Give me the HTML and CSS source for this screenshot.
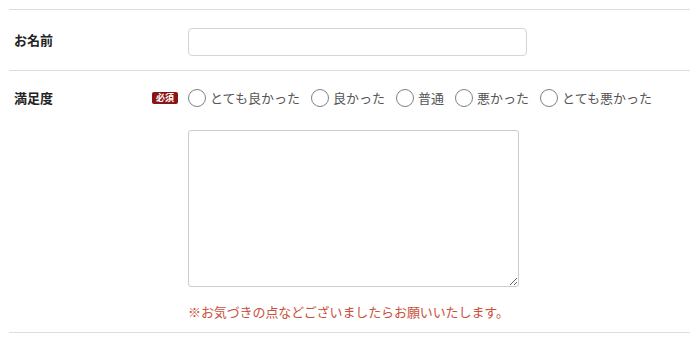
FILE: index.html
```html
<!DOCTYPE html>
<html lang="ja">
<head>
    <meta charset="UTF-8">
    <meta name="viewport" content="width=device-width, initial-scale=1.0">
    <title>アンケート</title>
    <link rel="stylesheet" href="styles.css">
</head>
<body>
    <form class="survey-form">
        <div class="form-row form-row-center">
            <div class="form-label">
                <label for="name">お名前</label>
            </div>
            <div class="form-field">
                <input type="text" id="name" name="name" class="text-input">
            </div>
        </div>
        <div class="form-row">
            <div class="form-label form-label-top">
                <span>満足度</span>
                <span class="required">必須</span>
            </div>
            <div class="form-field form-field-last">
                <div class="radio-group">
                    <label class="radio-item"><input type="radio" name="rating" value="5">とても良かった</label>
                    <label class="radio-item"><input type="radio" name="rating" value="4">良かった</label>
                    <label class="radio-item"><input type="radio" name="rating" value="3">普通</label>
                    <label class="radio-item"><input type="radio" name="rating" value="2">悪かった</label>
                    <label class="radio-item"><input type="radio" name="rating" value="1">とても悪かった</label>
                </div>
                <textarea name="comment" class="comment-box"></textarea>
                <p class="note">※お気づきの点などございましたらお願いいたします。</p>
            </div>
        </div>
    </form>
</body>
</html>
```

FILE: styles.css
```css
/* survey form */
body {
    margin: 0;
    padding: 9px 10px 0 9px;
    font-family: "Noto Sans CJK JP", "Noto Sans", sans-serif;
    font-size: 13px;
    color: #333;
    background-color: #fff;
}
.survey-form {
    border-bottom: 1px solid #ddd;
}
.form-row {
    display: flex;
    align-items: flex-start;
    border-top: 1px solid #ddd;
}
.form-row-center {
    align-items: center;
}
.form-label {
    width: 179px;
    box-sizing: border-box;
    padding: 0 10px 0 5px;
    display: flex;
    align-items: center;
    justify-content: space-between;
    font-weight: bold;
    line-height: 18px;
    color: #222;
}
.form-label-top {
    padding-top: 18px;
}
.required {
    display: inline-block;
    width: 26px;
    height: 12px;
    line-height: 12px;
    text-align: center;
    font-size: 9px;
    color: #fff;
    background-color: #8b1512;
    border-radius: 2px;
}
.form-field {
    flex: 1;
    padding: 18px 0 14px;
}
.form-field-last {
    padding-bottom: 10px;
}
.text-input {
    display: block;
    width: 339px;
    height: 28px;
    box-sizing: border-box;
    margin: 0;
    border: 1px solid #d4d4d4;
    border-radius: 4px;
    padding: 4px 8px;
}
.radio-group {
    display: flex;
    gap: 11px;
    height: 18px;
    line-height: 18px;
    color: #555;
}
.radio-item {
    display: flex;
    align-items: center;
    gap: 4px;
}
.radio-item input {
    appearance: none;
    width: 18px;
    height: 18px;
    margin: 0;
    border: 1px solid #808080;
    border-radius: 50%;
    background-color: #fff;
}
.comment-box {
    display: block;
    width: 331px;
    height: 157px;
    box-sizing: border-box;
    margin: 23px 0 0;
    border: 1px solid #ccc;
    border-radius: 3px;
}
.note {
    margin: 15px 0 0;
    line-height: 20px;
    letter-spacing: -0.1px;
    color: #c9503c;
}
```
